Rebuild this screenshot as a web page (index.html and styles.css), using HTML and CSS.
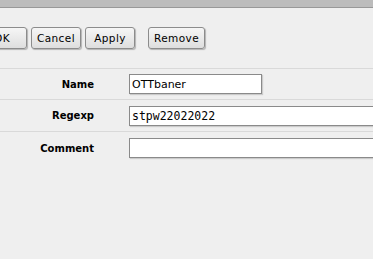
FILE: index.html
```html
<!DOCTYPE html>
<html lang="en">
<head>
    <meta charset="UTF-8">
    <title>Layer7 Protocol</title>
    <link rel="stylesheet" href="styles.css">
</head>
<body>

<div class="topbar"></div>

<div class="toolbar">
    <button class="btn">OK</button>
    <button class="btn">Cancel</button>
    <button class="btn">Apply</button>
    <button class="btn btn-remove">Remove</button>
</div>

<div class="form">
    <div class="row">
        <label>Name</label>
        <input type="text" class="field field-short" value="OTTbaner">
    </div>
    <div class="row">
        <label>Regexp</label>
        <input type="text" class="field field-long mono" value="stpw22022022">
    </div>
    <div class="row">
        <label>Comment</label>
        <input type="text" class="field field-long" value="">
    </div>
</div>

</body>
</html>
```

FILE: styles.css
```css
body {
    font-family: 'DejaVu Sans', Verdana, sans-serif;
    background-color: #efefef;
    color: #000;
    margin: 0;
    overflow: hidden;
}
.topbar {
    height: 7px;
    background-color: #bcbcbc;
    border-bottom: 1px solid #989898;
}
.toolbar {
    display: flex;
    gap: 4px;
    margin-left: -23px;
    padding: 19px 0;
}
.btn {
    flex-shrink: 0;
    width: 50px;
    height: 22px;
    padding: 0;
    font-family: 'DejaVu Sans', Verdana, sans-serif;
    font-size: 10.5px;
    letter-spacing: 0.4px;
    color: #000;
    background: linear-gradient(#f6f6f6, #dedede);
    border: 1px solid #8c8c8c;
    border-radius: 3px;
    box-shadow: 1px 1px 1px rgba(0, 0, 0, 0.25);
}
.btn-remove {
    margin-left: 9px;
    width: 57px;
}
.form {
    border-top: 1px solid #d9d9d9;
}
.row {
    display: flex;
    align-items: center;
    height: 30px;
    border-bottom: 1px solid #d9d9d9;
}
.row:nth-child(2) {
    height: 31px;
}
.row:last-child {
    border-bottom: none;
    padding-top: 1px;
}
label {
    flex-shrink: 0;
    width: 94px;
    text-align: right;
    font-size: 10px;
    font-weight: bold;
    margin-right: 35px;
}
.field {
    flex-shrink: 0;
    box-sizing: border-box;
    height: 20px;
    padding: 0 2px;
    font-family: 'DejaVu Sans', Verdana, sans-serif;
    font-size: 11px;
    background: #fff;
    border: 1px solid #8a8a8a;
    box-shadow: 1px 1px 1px rgba(0, 0, 0, 0.15);
    outline: none;
}
.field-short {
    width: 133px;
}
.field-long {
    width: 300px;
}
.mono {
    font-family: 'DejaVu Sans Mono', monospace;
    font-size: 11.5px;
}
```
